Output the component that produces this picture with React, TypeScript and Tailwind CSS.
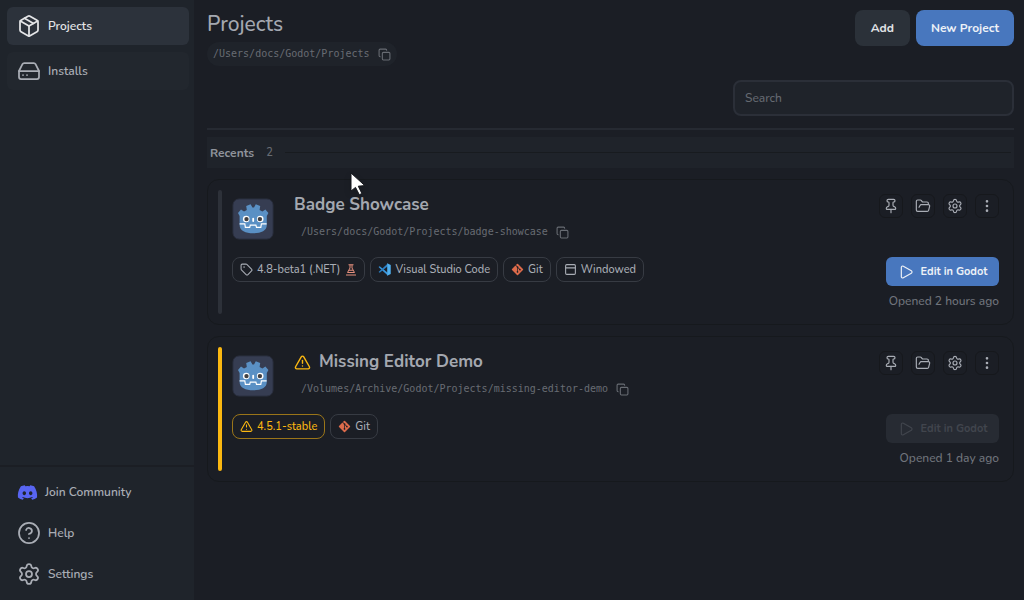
import { ReactNode } from "react";
import {
  Package,
  HardDrive,
  CircleHelp,
  Settings,
  Copy,
  Pin,
  FolderOpen,
  EllipsisVertical,
  Play,
  Tag,
  PanelTop,
  TriangleAlert,
} from "lucide-react";
import { FaDiscord, FaGitAlt } from "react-icons/fa";

type Badge = {
  label: string;
  icon: ReactNode;
  trailing?: ReactNode;
  warning?: boolean;
};

type Project = {
  name: string;
  path: string;
  opened: string;
  missing?: boolean;
  badges: Badge[];
};

const GodotLogo = () => (
  <svg viewBox="0 0 42 42" className="size-[42px] shrink-0" aria-hidden="true">
    <rect x="1" y="1" width="40" height="40" rx="6" fill="#363d52" stroke="#2b3040" />
    <path
      d="M6 15l3-3.400 3 1.800 2.800-1.400-.6-4 4.400-1.800 1.800 3.200h1.600l1.800-3.200 4.400 1.800-.6 4 2.800 1.400 3-1.800 3 3.400-1.600 3V27c0 5.800-6 8.300-13.600 8.300S7.600 32.800 7.600 27v-9Z"
      fill="#5a90c4"
    />
    <path
      d="M7.600 25.800h5.200l.6 3.600h4.300l.6-2.300h5.600l.6 2.300h4.300l.6-3.600h5.200"
      fill="none"
      stroke="#fff"
      strokeWidth="1.200"
    />
    <circle cx="14.200" cy="21" r="3.300" fill="#fff" />
    <circle cx="28.200" cy="21" r="3.300" fill="#fff" />
    <circle cx="14.500" cy="21.100" r="2.200" fill="#414042" />
    <circle cx="27.900" cy="21.100" r="2.200" fill="#414042" />
    <rect x="20.300" y="19.800" width="1.800" height="4.200" rx=".9" fill="#fff" />
  </svg>
);

const VsCodeLogo = () => (
  <svg viewBox="0 0 24 24" className="size-[13px]" aria-hidden="true">
    <path d="M1 7.500 3.200 6 18 18v5Z" fill="#3a96dd" />
    <path d="M1 16.500 3.200 18 18 6V1Z" fill="#2b7fc4" />
    <path d="m17 .5 6.500 3v17l-6.500 3Z" fill="#4fb0f0" />
  </svg>
);

const Flask = () => (
  <svg viewBox="0 0 24 24" className="ml-px size-3" fill="none" stroke="#e58f7d" strokeWidth="2" aria-hidden="true">
    <path d="M7 1.500h10M10 2v6L5 17h14L14 8V2M2 22h20" />
    <path d="M8 12.500h8" />
  </svg>
);

const gitIcon = <FaGitAlt className="size-[13px] text-[#dd6b4b]" />;

const projects: Project[] = [
  {
    name: "Badge Showcase",
    path: "/Users/docs/Godot/Projects/badge-showcase",
    opened: "Opened 2 hours ago",
    badges: [
      { label: "4.8-beta1 (.NET)", icon: <Tag className="size-[13px]" />, trailing: <Flask /> },
      { label: "Visual Studio Code", icon: <VsCodeLogo /> },
      { label: "Git", icon: gitIcon },
      { label: "Windowed", icon: <PanelTop className="size-[13px]" /> },
    ],
  },
  {
    name: "Missing Editor Demo",
    path: "/Volumes/Archive/Godot/Projects/missing-editor-demo",
    opened: "Opened 1 day ago",
    missing: true,
    badges: [
      { label: "4.5.1-stable", icon: <TriangleAlert className="size-[13px]" />, warning: true },
      { label: "Git", icon: gitIcon },
    ],
  },
];

const Path = ({ value }: { value: string }) => (
  <span className="flex items-center gap-2 text-[#686c73]">
    <span className="font-['DejaVu_Sans_Mono',monospace] text-[10px] leading-4">{value}</span>
    <button aria-label="Copy path">
      <Copy className="size-[13px]" />
    </button>
  </span>
);

const IconButton = ({ label, children }: { label: string; children: ReactNode }) => (
  <button
    aria-label={label}
    className="flex size-6 items-center justify-center rounded-md border border-[#16181c] text-[#a9adb5]"
  >
    {children}
  </button>
);

const ProjectCard = ({ project }: { project: Project }) => (
  <article className="flex gap-2.5 rounded-xl border border-[#16191d] py-2.5 pr-3.5 pl-2.5">
    <div className={project.missing ? "w-1 rounded-xs bg-[#fbb811]" : "w-1 rounded-xs bg-[#2d3139]"} />
    <div className="flex h-31 min-w-0 flex-1 flex-col pt-2">
      <div className="flex gap-5">
        <GodotLogo />
        <div className="flex flex-col">
          <h2 className="flex h-3.5 items-center gap-2 text-[17px] font-bold text-[#a4a8b0]">
            {project.missing && <TriangleAlert className="size-[17px] text-[#fbb811]" />}
            {project.name}
          </h2>
          <div className="pt-3 pl-[7px]">
            <Path value={project.path} />
          </div>
        </div>
      </div>
      <div className="mt-[17px] flex flex-wrap gap-[5px]">
        {project.badges.map((badge) => (
          <span
            key={badge.label}
            className={
              badge.warning
                ? "flex h-[25px] items-center gap-1 rounded-lg border border-[#9a7519] px-[7px] text-[11px] leading-4 font-medium text-[#fbb811]"
                : "flex h-[25px] items-center gap-1 rounded-lg border border-[#373b43] px-[7px] text-[11px] leading-4 font-medium text-[#a9adb5]"
            }
          >
            {badge.icon}
            {badge.label}
            {badge.trailing}
          </span>
        ))}
      </div>
    </div>
    <div className="flex flex-col items-end pt-1">
      <div className="flex gap-2">
        <IconButton label="Pin project">
          <Pin className="size-4" strokeWidth={1.75} />
        </IconButton>
        <IconButton label="Open folder">
          <FolderOpen className="size-4" strokeWidth={1.75} />
        </IconButton>
        <IconButton label="Project settings">
          <Settings className="size-4" strokeWidth={1.75} />
        </IconButton>
        <IconButton label="More options">
          <EllipsisVertical className="size-4" />
        </IconButton>
      </div>
      <button
        disabled={project.missing}
        className="mt-[39px] flex h-[29px] w-[113px] items-center justify-center gap-[7px] rounded-md bg-[#4877be] text-[11px] leading-4 font-bold text-[#edf1f7] disabled:bg-[#272b33] disabled:text-[#41454d]"
      >
        <Play className="size-4" strokeWidth={1.75} />
        Edit in Godot
      </button>
      <p className="mt-[5px] text-xs leading-5 font-medium text-[#70747c]">{project.opened}</p>
    </div>
  </article>
);

const Sidebar = () => (
  <aside className="flex w-[194px] shrink-0 flex-col justify-between bg-[#1f242b] text-xs leading-5 font-semibold text-[#a9adb5]">
    <nav className="flex flex-col gap-[7px] pt-[7px] pr-[5px] pl-[7px]">
      <a href="#projects" className="flex h-[38px] items-center gap-[7px] rounded-md bg-[#2c323b] px-2.5 text-[#e4e5e7]">
        <Package className="size-6" strokeWidth={1.75} />
        Projects
      </a>
      <a href="#installs" className="flex h-[38px] items-center gap-[7px] rounded-md bg-[#22272e] px-2.5">
        <HardDrive className="size-6" strokeWidth={1.75} />
        Installs
      </a>
    </nav>
    <nav className="flex flex-col gap-[3px] border-t-2 border-[#1b1e24] px-[17px] pt-1.5 pb-[7px]">
      <a href="#community" className="flex h-[38px] items-center gap-[7px]">
        <FaDiscord className="size-[21px] text-[#5865f2]" />
        Join Community
      </a>
      <a href="#help" className="flex h-[38px] items-center gap-[7px]">
        <CircleHelp className="size-6" strokeWidth={1.75} />
        Help
      </a>
      <a href="#settings" className="flex h-[38px] items-center gap-[7px]">
        <Settings className="size-6" strokeWidth={1.75} />
        Settings
      </a>
    </nav>
  </aside>
);

const App = () => {
  return (
    <div className="flex min-h-screen bg-[#1b1e25] font-['Nunito','Lato',sans-serif]">
      <Sidebar />
      <main className="relative min-w-0 flex-1 pt-2.5 pr-2.5 pl-[13px]">
        {/* HEADER */}
        <header className="flex items-start justify-between">
          <div>
            <h1 className="text-[21px] leading-7 font-medium text-[#a4a8b0]">Projects</h1>
            <div className="mt-1 flex h-6 items-center rounded-full bg-[#1f232a] px-1.5">
              <Path value="/Users/docs/Godot/Projects" />
            </div>
          </div>
          <div className="flex gap-1.5 text-xs font-bold">
            <button className="h-9 rounded-lg bg-[#2b3139] px-4 text-[#e1e3e6]">Add</button>
            <button className="h-9 rounded-lg bg-[#4877be] px-[15px] text-[#edf1f7]">New Project</button>
          </div>
        </header>
        <div className="mt-3.5 flex justify-end border-b-2 border-[#262a32] pb-3">
          <input
            type="search"
            aria-label="Search projects"
            placeholder="Search"
            className="h-9 w-[281px] rounded-lg border-2 border-[#2b2f38] bg-[#1f232a] px-2.5 text-xs font-medium text-[#a9adb5] placeholder:text-[#656971]"
          />
        </div>

        {/* PROJECT LIST */}
        <section className="mt-[7px]">
          <div className="flex h-[31px] items-center gap-3 bg-[#1f232a] px-[3px] leading-5">
            <h2 className="text-xs leading-5 font-bold text-[#8f939b]">Recents</h2>
            <span className="text-[11px] leading-4 font-medium text-[#686c73]">2</span>
            <hr className="flex-1 border-[#181b1f]" />
          </div>
          <div className="mt-[11px] flex flex-col gap-[11px]">
            {projects.map((project) => (
              <ProjectCard key={project.name} project={project} />
            ))}
          </div>
        </section>

        {/* POINTER */}
        <svg
          viewBox="0 0 18 26"
          className="pointer-events-none absolute top-[171px] left-[155px] h-[26px] w-[18px] drop-shadow-md"
          aria-hidden="true"
        >
          <path d="M2 2v18l4.500-3.600 3.800 7.300 2.600-1.200-3.600-7.300 6.500-.6Z" fill="#fff" stroke="#15171c" />
        </svg>
      </main>
    </div>
  );
};

export default App;
